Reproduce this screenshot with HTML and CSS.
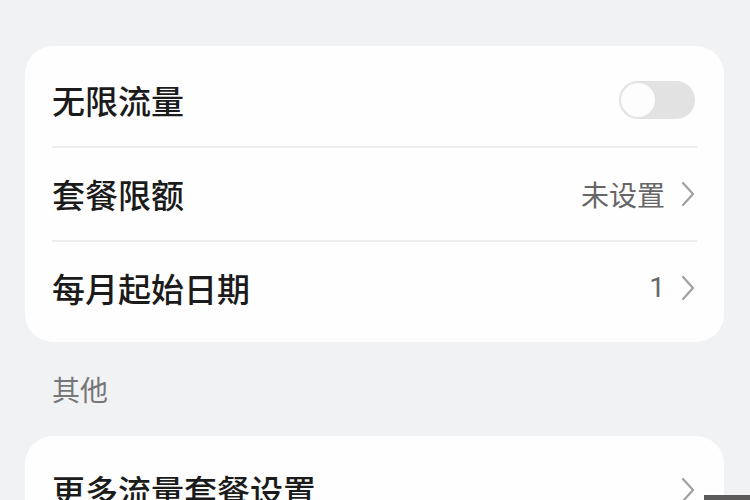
FILE: index.html
```html
<!DOCTYPE html>
<html lang="zh-CN">
<head>
<meta charset="utf-8">
<link rel="stylesheet" href="styles.css">
</head>
<body>
<div class="page">
  <div class="card">
    <div class="row">
      <span class="label">无限流量</span>
      <span class="toggle"><span class="knob"></span></span>
    </div>
    <div class="row">
      <span class="label">套餐限额</span>
      <span class="value">未设置<svg class="chev" viewBox="0 0 14 26"><path d="M2 2 L12 13 L2 24" /></svg></span>
    </div>
    <div class="row last">
      <span class="label">每月起始日期</span>
      <span class="value"><span class="num">1</span><svg class="chev" viewBox="0 0 14 26"><path d="M2 2 L12 13 L2 24" /></svg></span>
    </div>
  </div>
  <div class="section">其他</div>
  <div class="card">
    <div class="row last">
      <span class="label">更多流量套餐设置</span>
      <span class="value"><svg class="chev" viewBox="0 0 14 26"><path d="M2 2 L12 13 L2 24" /></svg></span>
    </div>
  </div>
</div>
<div class="mark"></div>
</body>
</html>
```
FILE: styles.css
```css
html, body {
  margin: 0;
  padding: 0;
  height: 100%;
  overflow: hidden;
}
body {
  background: #f1f2f4;
  font-family: "Noto Sans CJK SC", "Noto Sans", sans-serif;
  color: #1b1b1b;
}
.page {
  padding: 46px 26px 0 25px;
}
.card {
  background: #fefefe;
  border-radius: 28px;
  padding: 8px 27px;
}
.row {
  height: 92px;
  display: flex;
  align-items: center;
  justify-content: space-between;
  border-bottom: 2px solid #ededed;
}
.row.last {
  border-bottom: none;
}
.label {
  font-size: 33px;
  font-weight: 500;
  line-height: 1;
}
.value {
  display: flex;
  align-items: center;
  gap: 16px;
  font-size: 28px;
  color: #666;
  line-height: 1;
}
.num {
  font-family: Roboto, sans-serif;
}
.chev {
  width: 14px;
  height: 26px;
  margin-right: 2px;
}
.chev path {
  fill: none;
  stroke: #a0a0a0;
  stroke-width: 2.2;
  stroke-linecap: round;
  stroke-linejoin: round;
}
.toggle {
  width: 76px;
  height: 38px;
  border-radius: 19px;
  background: #e2e2e2;
  display: flex;
  align-items: center;
  padding: 0 2px;
  box-sizing: border-box;
  margin-right: 2px;
}
.knob {
  width: 34px;
  height: 34px;
  border-radius: 50%;
  background: #fdfdfd;
}
.section {
  height: 94px;
  display: flex;
  align-items: center;
  padding-left: 27px;
  font-size: 28px;
  color: #777;
}
.mark {
  position: fixed;
  right: 0;
  bottom: 0;
  width: 46px;
  height: 5px;
  background: #5a5a5a;
}
```
